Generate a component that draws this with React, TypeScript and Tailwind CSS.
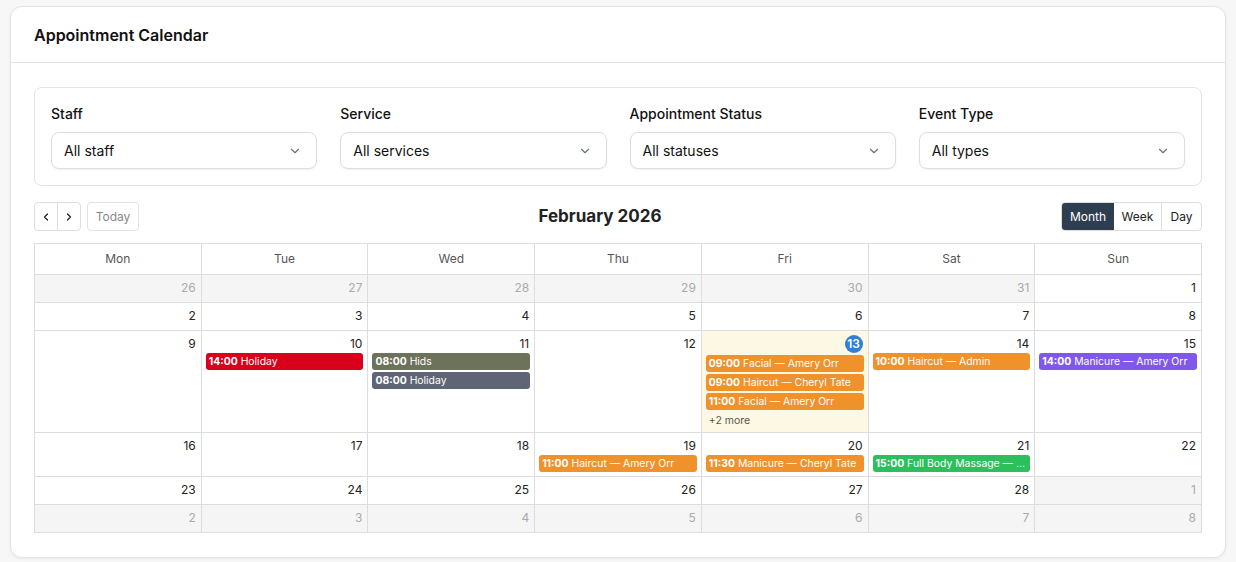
import React from "react";

type Ev = { time: string; title: string; color: string };
type Cell = { d: number; other?: boolean; today?: boolean; events?: Ev[]; more?: string };

const OR = "bg-[#f0922b]";
const weeks: Cell[][] = [
  [26, 27, 28, 29, 30, 31].map((d) => ({ d, other: true } as Cell)).concat([{ d: 1 }]),
  [2, 3, 4, 5, 6, 7, 8].map((d) => ({ d })),
  [
    { d: 9 },
    { d: 10, events: [{ time: "14:00", title: "Holiday", color: "bg-[#d9001b]" }] },
    {
      d: 11,
      events: [
        { time: "08:00", title: "Hids", color: "bg-[#6d725b]" },
        { time: "08:00", title: "Holiday", color: "bg-[#5f6574]" },
      ],
    },
    { d: 12 },
    {
      d: 13,
      today: true,
      events: [
        { time: "09:00", title: "Facial — Amery Orr", color: OR },
        { time: "09:00", title: "Haircut — Cheryl Tate", color: OR },
        { time: "11:00", title: "Facial — Amery Orr", color: OR },
      ],
      more: "+2 more",
    },
    { d: 14, events: [{ time: "10:00", title: "Haircut — Admin", color: OR }] },
    { d: 15, events: [{ time: "14:00", title: "Manicure — Amery Orr", color: "bg-[#7f58ea]" }] },
  ],
  [
    { d: 16 },
    { d: 17 },
    { d: 18 },
    { d: 19, events: [{ time: "11:00", title: "Haircut — Amery Orr", color: OR }] },
    { d: 20, events: [{ time: "11:30", title: "Manicure — Cheryl Tate", color: OR }] },
    { d: 21, events: [{ time: "15:00", title: "Full Body Massage — Amery Orr", color: "bg-[#2cbf5c]" }] },
    { d: 22 },
  ],
  [23, 24, 25, 26, 27, 28].map((d) => ({ d } as Cell)).concat([{ d: 1, other: true }]),
  [2, 3, 4, 5, 6, 7, 8].map((d) => ({ d, other: true })),
];

const days = ["Mon", "Tue", "Wed", "Thu", "Fri", "Sat", "Sun"];

function Chevron() {
  return (
    <svg width="14" height="14" viewBox="0 0 24 24" fill="none" stroke="#6b7280" strokeWidth="2" strokeLinecap="round" strokeLinejoin="round">
      <path d="m6 9 6 6 6-6" />
    </svg>
  );
}

function Select({ label, value }: { label: string; value: string }) {
  return (
    <div className="flex flex-col gap-2">
      <div className="text-[14px] leading-5 font-medium text-[#111]">{label}</div>
      <div className="h-[37px] flex items-center justify-between rounded-lg border border-[#dedede] bg-white pl-3 pr-3.5 shadow-[0_1px_2px_rgba(0,0,0,0.06)]">
        <span className="text-[14px] text-[#111]">{value}</span>
        <Chevron />
      </div>
    </div>
  );
}

export default function App() {
  return (
    <div className="min-h-[562px] bg-[#f7f7f7] px-[10px] pt-[6px] pb-1.5 font-['Inter',sans-serif]">
      <div className="rounded-xl border border-[#e3e3e3] bg-white shadow-[0_1px_3px_rgba(0,0,0,0.06)]">
        <div className="h-[56px] flex items-center px-[23px] border-b border-[#e3e3e3]">
          <h1 className="text-[16px] font-semibold text-[#111]">Appointment Calendar</h1>
        </div>
        <div className="px-[23px] pt-6 pb-6">
          <div className="rounded-lg border border-[#e3e3e3] px-4 pt-4 pb-4 grid grid-cols-4 gap-x-[23px]">
            <Select label="Staff" value="All staff" />
            <Select label="Service" value="All services" />
            <Select label="Appointment Status" value="All statuses" />
            <Select label="Event Type" value="All types" />
          </div>

          <div className="mt-[16px] h-[29px] flex items-center justify-between">
            <div className="flex items-center gap-1.5">
              <div className="flex h-[29px] rounded border border-[#dedede]">
                <button className="w-[23px] flex items-center justify-center border-r border-[#dedede]">
                  <svg width="12" height="12" viewBox="0 0 24 24" fill="none" stroke="#222" strokeWidth="2.5" strokeLinecap="round" strokeLinejoin="round"><path d="m15 18-6-6 6-6" /></svg>
                </button>
                <button className="w-[22px] flex items-center justify-center">
                  <svg width="12" height="12" viewBox="0 0 24 24" fill="none" stroke="#222" strokeWidth="2.5" strokeLinecap="round" strokeLinejoin="round"><path d="m9 18 6-6-6-6" /></svg>
                </button>
              </div>
              <button className="h-[29px] w-[52px] rounded border border-[#e3e3e3] text-[12px] text-[#888]">Today</button>
            </div>
            <div className="text-[17px] font-bold text-[#222]">February 2026</div>
            <div className="flex h-[29px] rounded border border-[#dedede] text-[12px] text-[#222] overflow-hidden">
              <button className="w-[52px] bg-[#2c3e50] text-white">Month</button>
              <button className="w-[48px] border-r border-[#dedede]">Week</button>
              <button className="w-[39px]">Day</button>
            </div>
          </div>

          <div className="mt-3 border-l border-t border-[#dddddd]">
            <div className="grid grid-cols-7">
              {days.map((d) => (
                <div key={d} className="h-[31px] flex items-center justify-center border-r border-b border-[#dddddd] text-[12px] text-[#555]">
                  {d}
                </div>
              ))}
            </div>
            <div className="grid grid-cols-7 grid-rows-[28px_28px_102px_44px_28px_28px]">
              {weeks.flat().map((c, i) => (
                <div
                  key={i}
                  className={`border-r border-b border-[#dddddd] overflow-hidden ${c.other ? "bg-[#f5f5f5]" : c.today ? "bg-[#fcf8e3]" : "bg-white"}`}
                >
                  <div className="flex justify-end pr-[5px] pt-[4px] h-[22px]">
                    {c.today ? (
                      <span className="mt-[-0.5px] w-[18px] h-[18px] rounded-full bg-[#2f80d6] text-white text-[12px] font-semibold flex items-center justify-center">{c.d}</span>
                    ) : (
                      <span className={`text-[12px] leading-[18px] ${c.other ? "text-[#aaa]" : "text-[#222]"}`}>{c.d}</span>
                    )}
                  </div>
                  <div className={`flex flex-col gap-[2px] px-[4px] ${c.today ? "pt-[2px]" : "pt-0"}`}>
                    {c.events?.map((e, j) => (
                      <div key={j} className={`${e.color} h-[17px] rounded-[3px] px-[3px] text-[10.4px] leading-[17px] text-white whitespace-nowrap overflow-hidden text-ellipsis`}>
                        <span className="font-bold">{e.time}</span> {e.title}
                      </div>
                    ))}
                    {c.more && <div className="text-[10.5px] leading-[17px] text-[#555] px-[3px]">{c.more}</div>}
                  </div>
                </div>
              ))}
            </div>
          </div>
        </div>
      </div>
    </div>
  );
}
